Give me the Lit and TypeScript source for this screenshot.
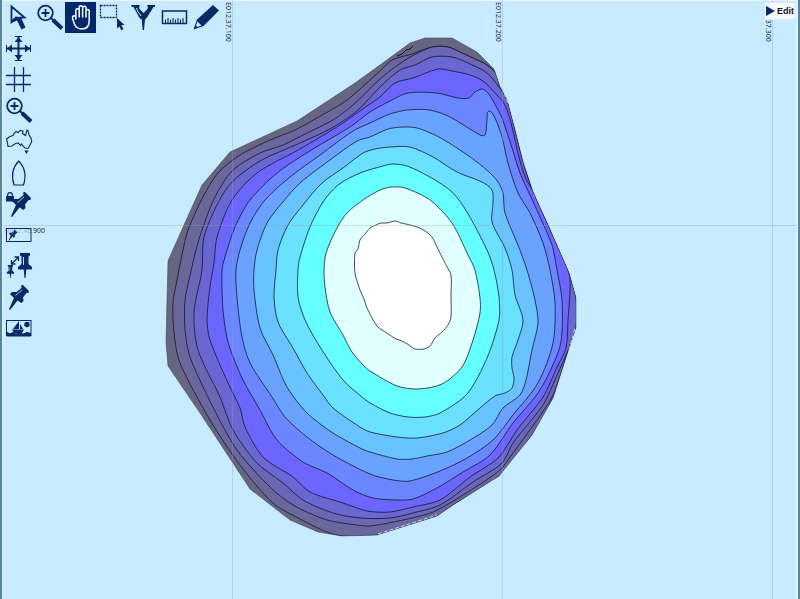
import { LitElement, html, svg, css } from "lit";
import type { TemplateResult } from "lit";
import { customElement, state } from "lit/decorators.js";
import { classMap } from "lit/directives/class-map.js";

type Point = [number, number];

function parse(text: string): Point[] {
  return text.trim().split(/\s+/).map((pair) => pair.split(",").map(Number) as Point);
}

/* Closed curve through the points; tangents are scaled to each segment's length. */
function smooth(points: Point[]): string {
  const n = points.length;
  const at = (i: number) => points[(i + n) % n];
  const tangent = (i: number): Point => {
    const [a, c] = [at(i - 1), at(i + 1)];
    const length = Math.hypot(c[0] - a[0], c[1] - a[1]) || 1;
    return [(c[0] - a[0]) / length, (c[1] - a[1]) / length];
  };
  let d = `M${points[0].join(" ")}`;
  for (let i = 0; i < n; i++) {
    const [b, c] = [at(i), at(i + 1)];
    const [t, u] = [tangent(i), tangent(i + 1)];
    const k = Math.hypot(c[0] - b[0], c[1] - b[1]) * 0.28;
    d += `C${(b[0] + t[0] * k).toFixed(1)} ${(b[1] + t[1] * k).toFixed(1)} ${(c[0] - u[0] * k).toFixed(1)} ${(c[1] - u[1] * k).toFixed(1)} ${c[0]} ${c[1]}`;
  }
  return d + "Z";
}

const shore =
  "380,65 355,83 297,121 230,152 202,185 184,225 168,261 167,300 166,342 168,366 200,413 250,489 290,520 318,532 342,536 377,535 437,516 453,505 499,476 532,435 553,398 569,348 576,327 576,298 569,273 548,225 533,192 523,162 515,130 507,100 500,87 494,69 477,52 452,38 425,38 410,43";

const depths: { fill: string; line: string }[] = [
  {
    fill: "#6a679c",
    line: "177,280 183,250 188,230 203,197 218,173 240,155 270,140 295,130 317,118 347,100 380,71 392,60 412,54 432,47 448,47 462,53 477,60 487,65 497,75 500,87 507,100 515,130 523,162 533,192 548,225 569,273 576,298 576,327 569,348 553,398 532,435 499,476 453,505 437,516 377,535 342,536 327,532 300,519 273,503 240,465 210,420 180,363 174,333 173,303",
  },
  {
    fill: "#6a67b4",
    line: "189,280 196,250 203,227 215,197 232,171 260,153 283,145 307,133 333,120 353,105 380,79 395,67 412,56 432,47 448,47 462,53 477,60 487,65 497,75 500,87 507,100 515,130 523,162 533,192 548,225 569,273 576,298 576,327 569,348 553,395 537,420 510,457 500,470 463,495 433,512 403,520 370,526 357,525 327,520 293,505 270,487 237,450 213,407 190,357 185,330 185,300",
  },
  {
    fill: "#6a67d2",
    line: "202,270 204,237 218,203 232,182 260,161 300,143 330,129 357,111 380,87 400,70 415,65 432,57 452,57 470,64 487,73 499,87 507,100 515,130 523,162 533,192 548,225 569,273 576,298 576,327 569,348 557,375 543,405 513,443 502,463 473,482 440,505 413,513 390,518 360,518 333,513 303,500 283,483 257,463 233,430 220,397 198,350 194,313",
  },
  {
    fill: "#6a66ff",
    line: "210,287 214,263 217,237 232,200 257,173 300,149 340,125 367,106 380,97 395,83 413,78 438,69 452,71 470,75 483,81 495,93 505,105 512,127 518,153 525,177 534,193 548,225 569,273 570,290 568,320 566,348 557,367 543,397 517,430 498,458 470,477 440,500 413,507 390,512 367,511 343,503 310,492 293,477 263,457 245,427 240,408 228,383 210,340 207,320",
  },
  {
    fill: "#6a87ff",
    line: "222,270 225,257 235,227 250,200 277,173 313,149 350,127 370,112 390,101 408,93 437,93 458,98 469,98 475,92 482,89 488,93 497,108 502,118 512,148 520,173 530,195 540,217 552,245 557,270 562,300 561,342 552,367 538,393 513,423 490,455 463,472 437,488 413,499 397,500 373,498 353,490 327,473 303,462 277,440 260,410 242,378 228,342 223,310",
  },
  {
    fill: "#69a3ff",
    line: "236,270 240,250 250,223 265,200 290,177 320,155 353,131 370,123 390,114 407,110 430,110 450,117 480,135 485,135 487,120 489,111 495,118 502,137 508,163 518,193 530,213 543,243 550,270 555,303 553,343 538,383 513,415 493,440 467,458 440,471 410,481 393,480 370,474 333,455 307,437 285,417 272,397 250,363 242,337 237,297",
  },
  {
    fill: "#69c3ff",
    line: "254,270 257,250 267,223 282,203 300,183 330,160 357,141 370,137 388,129 403,127 417,128 437,136 457,148 477,162 490,173 498,182 503,193 505,213 518,245 527,270 535,300 538,323 532,350 526,380 520,395 503,408 492,425 470,440 447,452 427,456 412,459 397,459 370,452 360,448 333,433 307,413 287,387 273,355 260,328 254,290",
  },
  {
    fill: "#69e1ff",
    line: "276,270 278,250 288,225 303,205 322,183 343,168 363,153 375,149 390,147 410,147 433,157 457,172 482,182 492,190 493,203 492,222 505,248 512,270 515,295 523,320 518,340 512,357 512,368 514,378 512,388 505,393 495,396 480,408 460,425 443,433 417,438 397,437 370,432 360,427 333,408 323,395 307,373 293,348 278,322 274,297",
  },
  {
    fill: "#66ffff",
    line: "298,270 300,257 310,227 323,202 338,185 360,173 383,166 393,164 407,166 430,177 452,192 467,212 487,250 494,270 499,297 499,320 487,358 467,394 440,413 425,417 408,417 390,413 370,403 362,397 343,380 320,347 305,320 298,297",
  },
  {
    fill: "#e0ffff",
    line: "324,270 326,253 337,228 347,213 363,200 380,190 391,187 405,188 430,200 452,223 468,255 475,270 480,298 480,313 473,340 462,367 442,384 418,389 397,386 370,371 365,367 352,352 343,335 330,312 325,287",
  },
  {
    fill: "#ffffff",
    line: "355,273 355,253 358,249 360,240 365,234 370,228 376,225 381,223 387,223 395,221 401,223 406,224 417,227 425,231 432,237 437,247 442,257 447,267 451,275 451,296 451,317 448,325 442,332 435,338 430,346 424,349 415,349 409,345 402,341 396,339 387,333 377,326 367,308 364,299 360,290",
  },
];

const pin = svg`<path d="M20 4.500 L22 4 L28 10 L27.500 12 L25.500 12 L22 16.500 L22.500 20 L20.500 22 L16.500 19.500 L9.500 28.500 L8 29 L8.500 27 L13 17 L9 13 L11 11 L15.500 11 L20.500 7 Z" fill="currentColor"/><path d="M14.500 14.500 L21 9" stroke="#c9ebff" stroke-width=".8"/>`;
const uprightPin = svg`<path d="M17 3 H27 V5.500 L25.500 6.500 V14 L29 17 V19.500 H23.300 L22.500 28 H21.500 L20.700 19.500 H15 V17 L18.500 14 V6.500 L17 5.500 Z" fill="currentColor"/><path d="M20.500 7 V15" stroke="#c9ebff" stroke-width=".9"/>`;
const magnifier = svg`<circle cx="11.500" cy="11" r="7.300" fill="none" stroke="currentColor" stroke-width="1.800"/><path d="M7.500 11 H15.500 M11.500 7 V15" stroke="currentColor" stroke-width="1.800"/><path d="M17 16 L20 19" stroke="currentColor" stroke-width="2"/><path d="M19 18 L28 26.500" stroke="currentColor" stroke-width="4"/>`;

const icons: Record<string, TemplateResult> = {
  pointer: svg`<path d="M8.500 4.500 V20 L12.500 16 L21.500 15.500 Z" fill="none" stroke="currentColor" stroke-width="1.800"/><path d="M8.500 21 L12.500 14.500 L18 15.500 L22.500 25.500 L18.500 27.500 L14 18.500 Z" fill="currentColor"/>`,
  zoom: magnifier,
  pan: svg`<path d="M10.800 17 V8.500 a1.700 1.700 0 0 1 3.400 0 V15 M14.200 8.500 V5.500 a1.700 1.700 0 0 1 3.400 0 V15 M17.600 6 a1.700 1.700 0 0 1 3.400 0 V15 M21 9 a1.600 1.600 0 0 1 3.200 0 V19 c0 5-2 8-7.500 8 c-4 0-6-2-7.300-5 L7.600 16.500 c-.6-2.500 1.500-3.600 3.200-1.500" fill="none" stroke="currentColor" stroke-width="1.500" stroke-linecap="round"/>`,
  select: svg`<rect x="4.500" y="3.500" width="16" height="12" fill="none" stroke="currentColor" stroke-width="1.300" stroke-dasharray="2 1"/><path d="M21 16 L28.500 23 L25.300 23.300 L27.500 27 L25.300 28.300 L23.300 24.500 L21 26.500 Z" fill="currentColor"/>`,
  divider: svg`<path d="M4.500 3 H13 C11.500 5 12 7 14 8.500 L16.500 11 L19 8.500 C21 7 21.500 5 20 3 H28 V5 H26.500 L20 15.500 L18 17.500 L17 28 H15.700 L14.700 17.500 L12.500 16 L6.500 5 H4.500 Z" fill="currentColor"/><path d="M9.500 6 L10.500 9 L14 14" fill="none" stroke="#c9ebff" stroke-width="1"/>`,
  ruler: svg`<rect x="4.500" y="9" width="24" height="12.500" fill="none" stroke="currentColor" stroke-width="1.500"/><path d="M7.500 21 V17.500 M10 21 V16 M12.500 21 V17.500 M15 21 V16 M17.500 21 V17.500 M20 21 V16 M22.500 21 V17.500 M25 21 V16" stroke="currentColor" stroke-width="1.100"/>`,
  draw: svg`<path d="M24 3 L30 8.500 L14.500 24 L4.500 27.500 L8 17.500 Z" fill="currentColor"/><path d="M8.500 19.500 L12.500 23.500 L8.500 25 L7 23.500 Z" fill="#c9ebff"/>`,
  extent: svg`<path d="M15.500 4 V27 M4 15.500 H27" stroke="currentColor" stroke-width="2"/><path d="M12 3.500 H19 M12 27.500 H19 M3.500 12 V19 M27.500 12 V19" stroke="currentColor" stroke-width="1"/><path d="M15.500 4 L19.500 9 H11.500 Z M15.500 27 L19.500 22 H11.500 Z M4 15.500 L9 11.500 V19.500 Z M27 15.500 L22 11.500 V19.500 Z" fill="currentColor"/>`,
  grid: svg`<path d="M11.500 3 V28 M20.500 3 V28 M3 11.500 H28 M3 20.500 H28" stroke="currentColor" stroke-width="1.300"/>`,
  country: svg`<path d="M3.500 13 L7 10.500 L10 9.500 L11 7.500 L13 5.500 L15 6.500 L17 4.500 L20 5 L19.500 7.500 L22.500 9.500 L24 4 L25 4.500 L26 9 L28 12 L28.700 15.500 L26.500 20 L25 22.500 L22 22 L20 20 L18.500 18 L17.500 19.500 L15.500 17 L12.500 17.500 L9 20 L5 20.500 L4.500 17 Z M22.300 25 H24.700 L23.500 27 Z" fill="none" stroke="currentColor" stroke-width="1.100"/>`,
  vessel: svg`<path d="M15.700 4 C11 9 7.500 17 11 28 H20.500 C24 17 20.500 9 15.700 4 Z" fill="none" stroke="currentColor" stroke-width="1.200"/>`,
  lockedPin: svg`<path d="M3 8 H11 V13.500 H3 Z" fill="currentColor"/><path d="M4.700 9 V7 a2.300 2.300 0 0 1 4.600 0 V9" fill="none" stroke="currentColor" stroke-width="1.200"/>${pin}`,
  pinView: svg`<rect x="3.500" y="9.500" width="24.500" height="13" fill="none" stroke="currentColor" stroke-width="1"/><g transform="translate(2 9) scale(.44)">${pin}</g>`,
  movePin: svg`<g transform="translate(-4 13.500) scale(.52)">${uprightPin}</g>${uprightPin}<path d="M9 13.500 L15 7.500 M11.500 7 H15.500 V11 M8.500 10 V14 H12.500" fill="none" stroke="currentColor" stroke-width="1.300"/>`,
  pin: svg`<g transform="translate(-2 0)">${pin}</g>`,
  picture: svg`<rect x="3.500" y="8.500" width="24.500" height="15" fill="none" stroke="currentColor"/><path d="M3.500 24.500 V19.500 L7 21.500 L10 20 L13 21.500 L16 20.500 L20 21.500 L24 20 L28 21 V24.500 Z M9 17.500 H21 L19 21 H11 Z M16 9 V17 H10 Z M17 12 L20 17 H17 Z" fill="currentColor"/><circle cx="24" cy="12.500" r="2.700" fill="currentColor"/>`,
  zoomLevel: magnifier,
};

const across = [
  ["pointer", "Pointer"], ["zoom", "Zoom in"], ["pan", "Pan"], ["select", "Select area"],
  ["divider", "Divider"], ["ruler", "Ruler"], ["draw", "Draw"],
];
const down = [
  ["extent", "Full extent"], ["grid", "Grid"], ["zoomLevel", "Zoom level"], ["country", "Region"],
  ["vessel", "Vessel"], ["lockedPin", "Locked pin"], ["pinView", "Pin view"],
  ["movePin", "Move pin"], ["pin", "Pin"], ["picture", "Picture"],
];

@customElement("depth-chart")
export class DepthChart extends LitElement {
  static styles = css`
    :host { display: block; }
    .chart { display: block; width: 100%; height: 100%; }
    .line { stroke: #10122c; stroke-width: 0.9; stroke-opacity: 0.85; stroke-linejoin: round; }
    .edge { stroke: #2c2e48; stroke-width: 0.8; stroke-opacity: 0.6; fill: none; }
    .mark { stroke: #10122c; stroke-width: 1; fill: none; }
    .surf { stroke: #c4d4ec; stroke-width: 1; stroke-dasharray: 4 2; fill: none; }
    .graticule { stroke: #8fa0b4; stroke-opacity: 0.35; stroke-width: 1; }
    .coord { font: 7px "Noto Sans", sans-serif; fill: #1c2740; }
    .faded { fill-opacity: 0.3; }
  `;

  render() {
    return html`<svg class="chart" viewBox="0 0 800 599" preserveAspectRatio="xMidYMid slice" role="img" aria-label="Depth contours">
      <defs><clipPath id="shore"><polygon points=${shore} /></clipPath></defs>
      <polygon points=${shore} fill="#676680" />
      <g clip-path="url(#shore)">
        ${depths.map((d) => svg`<path class="line" fill=${d.fill} d=${smooth(parse(d.line))} />`)}
        <path class="mark" d="M397 56 L402 54 L406 50 L410 49 L413 46" />
      </g>
      <polygon class="edge" points=${shore} />
      <path class="surf" d="M378 534 L437 515 M569 350 L575 328 M502 88 L508 103" />
      <path class="graticule" d="M232.500 0 V599 M502.500 0 V599 M772.500 0 V599 M0 225.500 H800" />
      <text class="coord" transform="translate(226 2) rotate(90)">E012.37.100</text>
      <text class="coord" transform="translate(496 2) rotate(90)">E012.37.200</text>
      <text class="coord" transform="translate(766 2) rotate(90)">E012.37.300</text>
      <text class="coord" x="4" y="233"><tspan class="faded">N042.46.</tspan>900</text>
    </svg>`;
  }
}

@customElement("app-root")
export class AppRoot extends LitElement {
  @state() private tool = "pan";

  static styles = css`
    :host { display: block; height: 100vh; }
    .frame {
      box-sizing: border-box;
      height: 100%;
      display: grid;
      overflow: hidden;
      background: #c9ebff;
      box-shadow: inset 2px 0 #4f87a8, inset -2px 0 #4f87a8, inset 3px 0 #eef8ff, inset -4px 0 #e4f2fb, inset 0 1px #e8f4fb;
    }
    .map, .overlay { grid-area: 1 / 1; min-width: 0; min-height: 0; }
    .overlay {
      display: flex;
      justify-content: space-between;
      align-items: flex-start;
      padding: 2px 4px 0 3px;
    }
    .tools { display: flex; flex-direction: column; }
    .row { display: flex; }
    .tool {
      display: block;
      width: 31px;
      height: 31px;
      padding: 0;
      border: 0;
      background: none;
      color: #062a66;
    }
    .tool.active { background: #00286b; color: #fff; }
    .icon { display: block; width: 31px; height: 31px; }
    .edit {
      display: flex;
      align-items: center;
      gap: 2px;
      height: 18px;
      padding: 0 1px;
      border: 1px solid #dde6ee;
      background: #f4f9fd;
      color: #111;
      font: bold 9px "Liberation Sans", sans-serif;
    }
    .play { display: block; width: 9px; height: 10px; fill: #062a66; }
  `;

  private button([id, label]: string[]) {
    return html`<button
      class=${classMap({ tool: true, active: this.tool === id })}
      aria-label=${label}
      aria-pressed=${this.tool === id ? "true" : "false"}
      @click=${() => (this.tool = id)}
    ><svg class="icon" viewBox="0 0 31 31" aria-hidden="true">${icons[id]}</svg></button>`;
  }

  render() {
    return html`<main class="frame">
      <depth-chart class="map"></depth-chart>
      <div class="overlay">
        <div class="tools">
          <div class="row">${across.map((t) => this.button(t))}</div>
          ${down.map((t) => this.button(t))}
        </div>
        <button class="edit"><svg class="play" viewBox="0 0 9 10" aria-hidden="true"><path d="M0 0 L9 5 L0 10 Z" /></svg>Edit</button>
      </div>
    </main>`;
  }
}
